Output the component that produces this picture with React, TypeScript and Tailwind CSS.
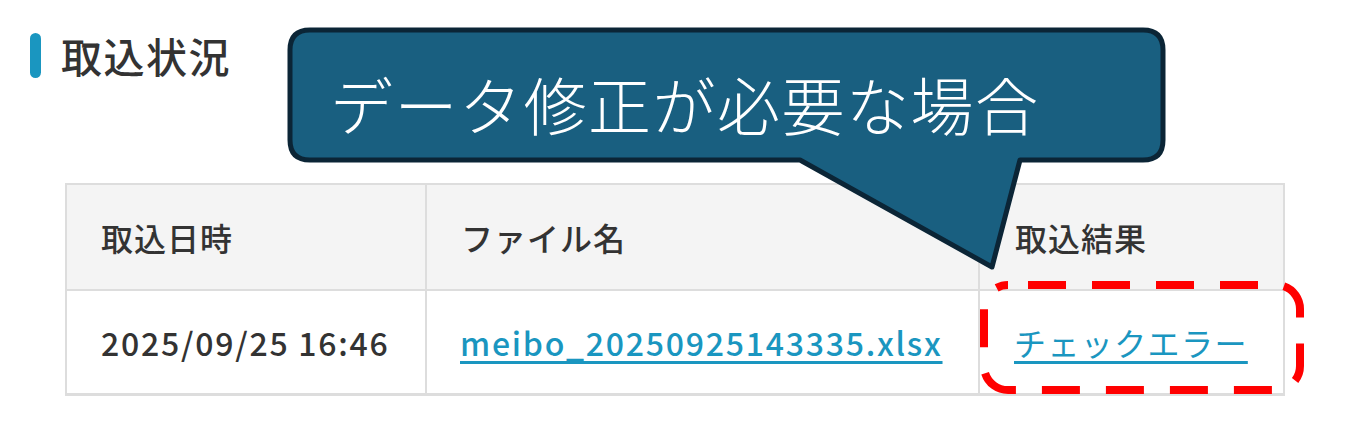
import React from 'react';

const cjk = "font-['Noto_Sans_CJK_JP','Noto_Sans',sans-serif]";

const Callout: React.FC = () => (
    <div className="absolute left-0 top-0 w-[1355px] h-[435px] pointer-events-none">
        <svg width="1355" height="435" className="absolute left-0 top-0">
            {/* balloon with tail toward the result column */}
            <path
                d="M 310 30 H 1143 Q 1163 30 1163 50 V 140 Q 1163 160 1143 160 H 1020 L 992 267 L 800 160 H 310 Q 290 160 290 140 V 50 Q 290 30 310 30 Z"
                fill="#195f80"
                stroke="#0b2536"
                strokeWidth="5"
                strokeLinejoin="round"
            />
            {/* red dashed highlight */}
            <rect
                x="984"
                y="285"
                width="316"
                height="105"
                rx="24"
                fill="none"
                stroke="#ff0000"
                strokeWidth="8"
                strokeDasharray="38 26"
                strokeDashoffset="-20"
            />
        </svg>
        <div className={`absolute left-[330px] top-[63px] text-[63px] leading-[80px] tracking-[1.5px] font-light text-white ${cjk}`}>
            データ修正が必要な場合
        </div>
    </div>
);

export default function App() {
    return (
        <div className={`relative w-[1355px] h-[435px] bg-white overflow-hidden text-[#333] ${cjk}`}>
            <div className="flex items-center gap-[20px] pl-[30px] pt-[32px]">
                <span className="block w-[11px] h-[45px] rounded-full bg-[#1a96c0]" />
                <h2 className="text-[41px] leading-[46px] font-medium tracking-[1.5px]">取込状況</h2>
            </div>

            <table className="ml-[65px] mt-[105px] w-[1220px] border-collapse text-[32px]">
                <thead>
                    <tr className="h-[106px] bg-[#f4f4f4]">
                        <th className="w-[360px] border-2 border-[#dddddd] pl-[34px] text-left font-medium tracking-[1px]">取込日時</th>
                        <th className="w-[553px] border-2 border-[#dddddd] pl-[34px] text-left font-medium tracking-[1px]">ファイル名</th>
                        <th className="border-2 border-[#dddddd] pl-[35px] text-left font-medium tracking-[1px]">取込結果</th>
                    </tr>
                </thead>
                <tbody>
                    <tr className="h-[104px] border-b-[3px] border-[#dddddd]">
                        <td className="border-2 border-b-[3px] border-[#dddddd] pl-[34px] font-medium tracking-[1.75px]">2025/09/25 16:46</td>
                        <td className="border-2 border-b-[3px] border-[#dddddd] pl-[33px]">
                            <a href="#" className="text-[#1a96c0] underline underline-offset-[5px] font-medium tracking-[1.75px]">meibo_20250925143335.xlsx</a>
                        </td>
                        <td className="border-2 border-b-[3px] border-[#dddddd] pl-[34px]">
                            <a href="#" className="text-[#1a96c0] underline underline-offset-[5px] tracking-[1.4px]">チェックエラー</a>
                        </td>
                    </tr>
                </tbody>
            </table>

            <Callout />
        </div>
    );
}
